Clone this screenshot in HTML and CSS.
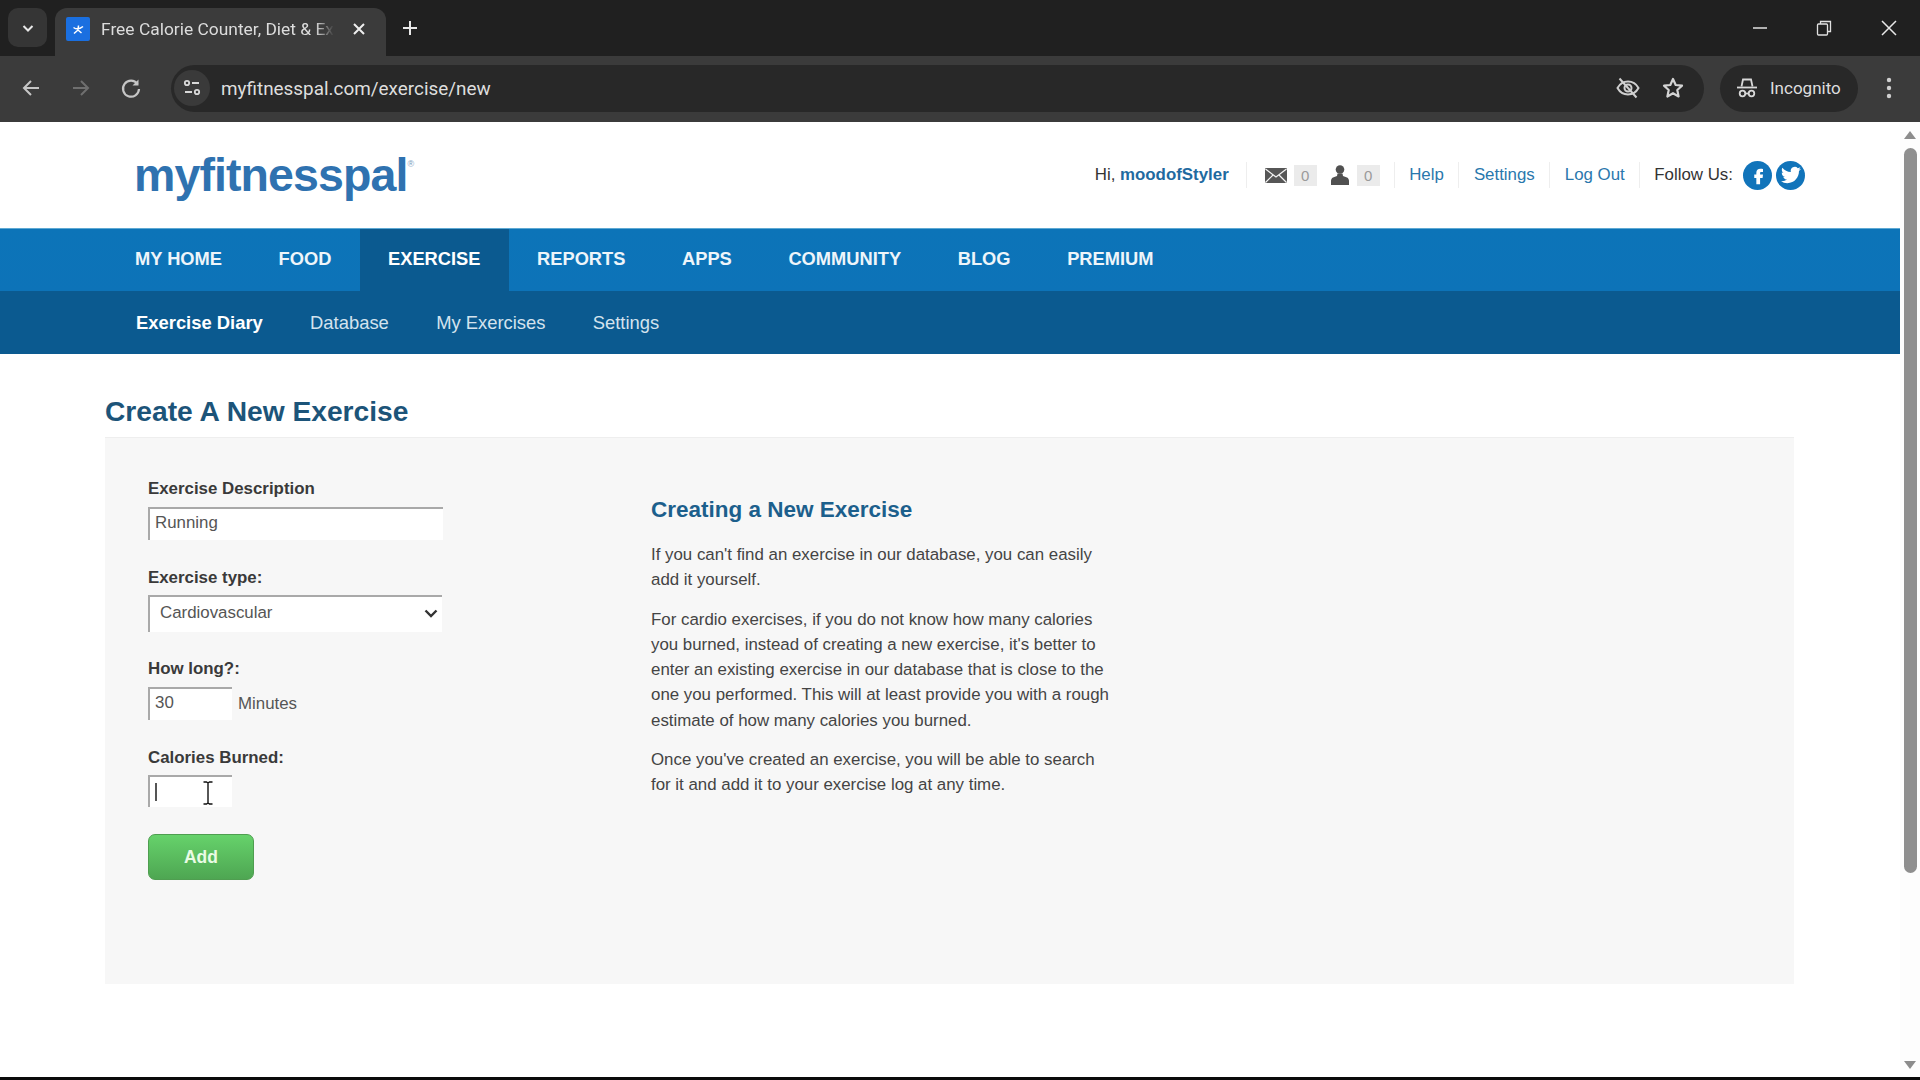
FILE: index.html
```html
<!DOCTYPE html>
<html lang="en">
<head>
<meta charset="utf-8">
<title>Free Calorie Counter, Diet &amp; Exercise Journal</title>
<link rel="stylesheet" href="styles.css">
</head>
<body>
<div class="tabstrip">
  <div class="tabsearch"><svg width="16" height="16" viewBox="0 0 16 16"><path d="M3.500 6l4.500 4.500L12.500 6" fill="none" stroke="#e8e8e8" stroke-width="2"/></svg></div>
  <div class="tab">
    <span class="favicon"><svg width="24" height="24" viewBox="0 0 24 24"><rect width="24" height="24" rx="2" fill="#1a6fe0"/><path d="M12.500 8.500l-.5 4.500M12 13l-4 3.500M12 13l3.500 3M7.500 10.500c2.500 1.800 6 1.800 9.500-1" fill="none" stroke="#fff" stroke-width="1.500"/></svg></span>
    <span class="tabtitle">Free Calorie Counter, Diet &amp; Ex</span>
    <svg class="tabclose" width="14" height="14" viewBox="0 0 14 14"><path d="M2 2l10 10M12 2L2 12" stroke="#eee" stroke-width="2"/></svg>
  </div>
  <svg class="newtab" width="18" height="18" viewBox="0 0 18 18"><path d="M9 2v14M2 9h14" stroke="#e8e8e8" stroke-width="2"/></svg>
  <div class="winctl">
    <svg width="16" height="16" viewBox="0 0 16 16"><path d="M1 8h14" stroke="#e0e0e0" stroke-width="1.500"/></svg>
    <svg width="16" height="16" viewBox="0 0 16 16"><rect x="1.500" y="4" width="10" height="11" rx="1" fill="none" stroke="#e0e0e0" stroke-width="1.300"/><path d="M4.500 4V1.500h10v10H11.500" fill="none" stroke="#e0e0e0" stroke-width="1.300"/></svg>
    <svg width="18" height="18" viewBox="0 0 18 18"><path d="M2 2l14 14M16 2L2 16" stroke="#e8e8e8" stroke-width="1.500"/></svg>
  </div>
</div>
<div class="toolbar">
  <svg class="tbicon" width="22" height="22" viewBox="0 0 22 22"><path d="M19 11H4M11 4l-7 7 7 7" fill="none" stroke="#c6c6c6" stroke-width="2"/></svg>
  <svg class="tbicon" width="22" height="22" viewBox="0 0 22 22"><path d="M3 11h15M11 4l7 7-7 7" fill="none" stroke="#6f6f6f" stroke-width="2"/></svg>
  <svg class="tbicon" width="22" height="22" viewBox="0 0 22 22"><path d="M17.500 7A8 8 0 1 0 19 12" fill="none" stroke="#c6c6c6" stroke-width="2.200"/><path d="M18.500 2.500v6h-6z" fill="#c6c6c6"/></svg>
  <div class="omnibox">
    <span class="tune"><svg width="20" height="20" viewBox="0 0 20 20"><g fill="none" stroke="#d8d8d8" stroke-width="1.800"><circle cx="5" cy="5" r="2.200"/><path d="M10 5h7M3 14h7"/><circle cx="15" cy="14" r="2.200"/></g></svg></span>
    <span class="url">myfitnesspal.com/exercise/new</span>
    <svg class="omniicon" width="26" height="26" viewBox="0 0 26 26"><g fill="none" stroke="#cfcfcf" stroke-width="2"><path d="M2.500 13C5 8.500 9 6.500 13 6.500s8 2 10.500 6.500c-2.500 4.500-6.500 6.500-10.500 6.500S5 17.500 2.500 13z"/><circle cx="13" cy="13" r="3.500"/><path d="M4.500 3.500l17 19"/></g></svg>
    <svg class="omniicon" width="24" height="24" viewBox="0 0 24 24"><path d="M12 3l2.700 6 6.300.700-4.700 4.300 1.300 6.500-5.600-3.300-5.600 3.300 1.300-6.500L3 9.700 9.300 9z" fill="none" stroke="#d4d4d4" stroke-width="2.200" stroke-linejoin="round"/></svg>
  </div>
  <div class="incog">
    <svg width="24" height="24" viewBox="0 0 24 24"><g fill="none" stroke="#d8d8d8" stroke-width="1.800"><path d="M6.500 10.500l1.500-7h8l1.500 7"/><path d="M2 11.500h20"/><circle cx="7.500" cy="17.500" r="2.800"/><circle cx="16.500" cy="17.500" r="2.800"/><path d="M10.300 17.500h3.400"/></g></svg>
    <span>Incognito</span>
  </div>
  <svg class="kebab" width="6" height="24" viewBox="0 0 6 24"><g fill="#d0d0d0"><circle cx="3" cy="4" r="2.200"/><circle cx="3" cy="12" r="2.200"/><circle cx="3" cy="20" r="2.200"/></g></svg>
</div>
<div class="viewport">
  <div class="page">
    <header class="sitehead">
      <a class="logo">myfitnesspal<sup>®</sup></a>
      <div class="userbar">
        <span class="hi">Hi, <b>moodofStyler</b></span>
        <span class="counts">
          <svg width="22" height="15" viewBox="0 0 22 15"><rect width="22" height="15" rx="1" fill="#565656"/><path d="M.5 1L11 9 21.500 1M.5 14.500L8 7M21.500 14.500L14 7" fill="none" stroke="#f4f4f4" stroke-width="1.200"/></svg>
          <span class="badge">0</span>
          <svg class="person" width="18" height="20" viewBox="0 0 18 20"><circle cx="9" cy="4.500" r="4.300" fill="#505050"/><path d="M6.500 8.500h5l.5 2.500 4 1.500c1.300.6 2 2 2 3.500V20H0v-4c0-1.500.7-2.900 2-3.500L6 11z" fill="#505050"/></svg>
          <span class="badge">0</span>
        </span>
        <a class="ulink">Help</a>
        <a class="ulink">Settings</a>
        <a class="ulink">Log Out</a>
        <span class="follow">Follow Us:</span>
        <span class="social"><svg width="20" height="20" viewBox="0 0 24 24"><path d="M15 4.500c-3.200 0-5 1.800-5 4.800V11.500H7.500v4H10V23h4.500v-7.500h3l.5-4h-3.500V9.700c0-1 .4-1.400 1.400-1.400H18V4.700c-.8-.1-1.900-.2-3-.2z" fill="#fff"/></svg></span>
        <span class="social"><svg width="20" height="20" viewBox="0 0 24 24"><path d="M23.953 4.570a10 10 0 01-2.825.775 4.958 4.958 0 002.163-2.723c-.951.555-2.005.959-3.127 1.184a4.920 4.920 0 00-8.384 4.482C7.690 8.095 4.067 6.130 1.640 3.162a4.822 4.822 0 00-.666 2.475c0 1.710.870 3.213 2.188 4.096a4.904 4.904 0 01-2.228-.616v.060a4.923 4.923 0 003.946 4.827 4.996 4.996 0 01-2.212.085 4.936 4.936 0 004.604 3.417 9.867 9.867 0 01-6.102 2.105c-.390 0-.779-.023-1.170-.067a13.995 13.995 0 007.557 2.209c9.053 0 13.998-7.496 13.998-13.985 0-.210 0-.420-.015-.630A9.935 9.935 0 0024 4.590z" fill="#fff"/></svg></span>
      </div>
    </header>
    <nav class="mainnav">
      <a>MY HOME</a><a>FOOD</a><a class="on">EXERCISE</a><a>REPORTS</a><a>APPS</a><a>COMMUNITY</a><a>BLOG</a><a>PREMIUM</a>
    </nav>
    <nav class="subnav">
      <a class="on">Exercise Diary</a><a>Database</a><a>My Exercises</a><a>Settings</a>
    </nav>
    <main class="content">
      <h1>Create A New Exercise</h1>
      <section class="panel">
        <form class="formcol">
          <label class="l1">Exercise Description</label>
          <input class="field wide" type="text" value="Running">
          <label class="l2">Exercise type:</label>
          <div class="pickwrap">
            <select class="pick"><option>Cardiovascular</option></select>
            <svg class="chev" width="14" height="9" viewBox="0 0 14 9"><path d="M1.500 1.500L7 7l5.500-5.500" fill="none" stroke="#333" stroke-width="2.400"/></svg>
          </div>
          <label class="l3">How long?:</label>
          <div class="inline"><input class="field small" type="text" value="30"><span>Minutes</span></div>
          <label class="l4">Calories Burned:</label>
          <div class="caretwrap">
            <div class="field small fake"><i class="caret"></i></div>
            <svg class="ibeam" width="12" height="24" viewBox="0 0 12 24"><path d="M1.500 1h3l1.500 1 1.500-1h3M1.500 23h3l1.500-1 1.500 1h3M6 2v20" fill="none" stroke="#111" stroke-width="1.400"/></svg>
          </div>
          <button class="add" type="button">Add</button>
        </form>
        <aside class="info">
          <h2>Creating a New Exercise</h2>
          <p>If you can't find an exercise in our database, you can easily<br>add it yourself.</p>
          <p>For cardio exercises, if you do not know how many calories<br>you burned, instead of creating a new exercise, it's better to<br>enter an existing exercise in our database that is close to the<br>one you performed. This will at least provide you with a rough<br>estimate of how many calories you burned.</p>
          <p>Once you've created an exercise, you will be able to search<br>for it and add it to your exercise log at any time.</p>
        </aside>
      </section>
    </main>
  </div>
  <div class="scrollbar">
    <svg width="14" height="8" viewBox="0 0 14 8"><path d="M7 0l6 8H1z" fill="#8c8c8c"/></svg>
    <div class="thumb"></div>
    <svg width="14" height="8" viewBox="0 0 14 8"><path d="M7 8L1 0h12z" fill="#8c8c8c"/></svg>
  </div>
</div>
<div class="bottomedge"></div>
</body>
</html>
```
FILE: styles.css
```css
* { box-sizing: border-box; }
html, body { margin: 0; padding: 0; height: 1080px; overflow: hidden; background: #fff; }
body { font-family: "Liberation Sans", Arial, sans-serif; display: flex; flex-direction: column; }

.tabstrip { height: 56px; background: #202020; display: flex; align-items: flex-start; padding: 8px 0 0 8px; flex: none; }
.tabsearch { width: 39px; height: 39px; border-radius: 10px; background: #353535; display: flex; align-items: center; justify-content: center; flex: none; }
.tab { width: 331px; height: 48px; margin-left: 8px; background: #3b3b3b; border-radius: 12px 12px 0 0; display: flex; align-items: center; padding: 0 20px 7px 11px; flex: none; }
.favicon { width: 24px; height: 24px; flex: none; display: flex; }
.tabtitle { margin-left: 11px; white-space: nowrap; color: #dcdcdc; font-family: Roboto, sans-serif; font-size: 17.400px; flex: none; -webkit-mask-image: linear-gradient(90deg, #000 92%, transparent 100%); mask-image: linear-gradient(90deg, #000 92%, transparent 100%); }
.tabclose { margin-left: auto; flex: none; }
.newtab { margin: 11px 0 0 15px; flex: none; }
.winctl { margin-left: auto; display: flex; align-items: center; gap: 48px; padding: 11px 22px 0 0; }

.toolbar { height: 66px; background: #3b3b3b; display: flex; align-items: center; padding: 0 0 2px 20px; flex: none; }
.tbicon { flex: none; margin-right: 28px; }
.tbicon:nth-child(3) { margin-right: 26px; }
.omnibox { width: 1533px; height: 47px; border-radius: 24px; background: #282828; display: flex; align-items: center; padding: 0 12px 0 3px; flex: none; margin-left: 3px; }
.tune { width: 36px; height: 36px; border-radius: 50%; background: #3a3a3a; display: flex; align-items: center; justify-content: center; flex: none; }
.url { margin-left: 11px; color: #dedede; font-family: Roboto, sans-serif; font-size: 18.900px; }
.omniicon { flex: none; }
.omniicon:nth-of-type(1) { margin-left: auto; margin-right: 20px; }
.omniicon:nth-of-type(2) { margin-right: 7px; }
.incog { width: 138px; height: 47px; margin-left: 16px; border-radius: 24px; background: #282828; display: flex; align-items: center; gap: 11px; padding-left: 15px; color: #dedede; font-family: Roboto, sans-serif; font-size: 17px; flex: none; }
.kebab { margin-left: 28px; flex: none; }

.viewport { height: 955px; display: flex; flex: none; }
.page { width: 1900px; flex: none; }
.sitehead { height: 106px; display: flex; align-items: center; justify-content: space-between; padding: 0 95px 0 134px; }
.logo { font-size: 46.500px; font-weight: 700; color: #2f72b0; letter-spacing: -.9px; line-height: 1; }
.logo sup { font-size: 9px; font-weight: 400; vertical-align: 24px; line-height: 0; color: #7a9dbd; letter-spacing: 0; }
.userbar { display: flex; align-items: center; font-size: 16.875px; color: #333; }
.hi { color: #333; padding-right: 17px; border-right: 1px solid #eee; line-height: 26px; }
.hi b { color: #1f6aa0; font-weight: 700; }
.counts { display: flex; align-items: center; padding: 0 14px 0 18px; border-right: 1px solid #eee; height: 26px; }
.badge { width: 23px; height: 21px; margin-left: 7px; background: #ebebeb; color: #9a9a9a; font-size: 15px; display: flex; align-items: center; justify-content: center; }
.person { margin-left: 14px; }
.person + .badge { margin-left: 8px; }
.ulink { color: #2a78ad; padding: 0 14.500px; border-right: 1px solid #eee; line-height: 26px; }
.follow { color: #333; margin-left: 14px; margin-right: 10px; }
.social { width: 29px; height: 29px; border-radius: 50%; background: #1174ba; display: flex; align-items: center; justify-content: center; margin-right: 4px; }
.social:last-child { margin-right: 0; }

.mainnav { height: 63px; background: linear-gradient(#0c74b8, #0d73b8); border-top: 1px solid #5ea9d3; display: flex; padding-left: 106.700px; }
.mainnav a { padding: 0 28.300px; line-height: 60px; color: #eef5fa; font-size: 18.300px; font-weight: 700; white-space: nowrap; }
.mainnav a.on { background: #0b5a90; color: #fff; }
.subnav { height: 63px; background: #0b5a90; display: flex; padding-left: 136px; gap: 47.300px; }
.subnav a { line-height: 64px; color: #d4e3ee; font-size: 18.400px; white-space: nowrap; }
.subnav a.on { color: #fff; font-weight: 700; }

.content { padding: 0 106px 0 105px; }
h1 { margin: 0; height: 83px; padding-top: 40px; font-size: 28.200px; line-height: 34px; color: #1c5479; font-weight: 700; }
.panel { height: 547px; background: #f7f7f7; border-top: 1px solid #eee; display: flex; padding-left: 43px; }
.formcol { width: 503px; flex: none; display: flex; flex-direction: column; align-items: flex-start; padding-top: 41px; }
label { display: block; font-size: 16.875px; line-height: 20px; font-weight: 700; color: #3a3a3a; }
.field { border-style: solid; border-width: 2px 0 0 2px; border-color: #a9a9a9; background: #fff; font-family: "Liberation Sans", Arial, sans-serif; font-size: 16.875px; color: #555; padding: 0 0 4px 5px; outline: 0; border-radius: 0; display: block; }
.wide { width: 295px; height: 33px; margin-top: 8px; }
.l2 { margin-top: 28px; }
.pickwrap { position: relative; margin-top: 7px; width: 294px; }
.pick { appearance: none; -webkit-appearance: none; display: block; width: 294px; height: 37px; border-style: solid; border-width: 2px 0 0 2px; border-color: #a9a9a9; background: #fff; font-family: "Liberation Sans", Arial, sans-serif; font-size: 16.875px; color: #555; padding: 0 0 4px 10px; border-radius: 0; outline: 0; }
.chev { position: absolute; right: 4px; top: 14px; }
.l3 { margin-top: 27px; }
.inline { display: flex; align-items: center; margin-top: 8px; font-size: 16.875px; color: #555; gap: 6px; }
.small { width: 84px; height: 33px; }
.l4 { margin-top: 28px; }
.caretwrap { position: relative; margin-top: 7px; }
.fake { height: 32px; padding: 6px 0 0 5px; }
.caret { display: block; width: 1.500px; height: 18px; background: #555; }
.ibeam { position: absolute; left: 54px; top: 6px; }
.add { margin-top: 27px; width: 106px; height: 46px; border: 1px solid #4f9e50; border-radius: 7px; background: linear-gradient(#66d26b, #4ea652); color: #e9fbe4; font-family: "Liberation Sans", Arial, sans-serif; font-size: 17.500px; font-weight: 700; padding: 0; }

.info { padding-top: 59px; color: #444; }
h2 { margin: 0 0 19px; font-size: 22.500px; line-height: 26px; color: #1c5f8c; font-weight: 700; }
.info p { margin: 0 0 14px; font-size: 16.875px; line-height: 25.300px; white-space: nowrap; }

.scrollbar { width: 20px; flex: none; display: flex; flex-direction: column; align-items: center; background: #fdfdfd; padding-top: 9px; }
.thumb { width: 13px; height: 725px; margin: 9px 0 188px; background: #8f8f8f; border-radius: 7px; }
.bottomedge { height: 3px; background: #0a0a0a; flex: none; }
```
